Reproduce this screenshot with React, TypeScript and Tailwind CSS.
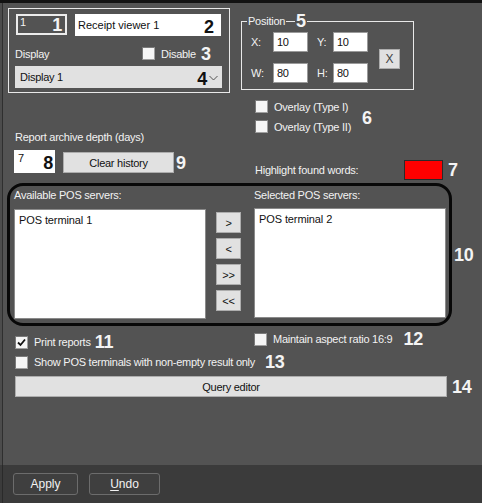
import { ReactNode } from "react";

function Num({ children, dark, className = "" }: { children: ReactNode; dark?: boolean; className?: string }) {
  return (
    <span
      className={`text-[18px] leading-[18px] font-bold ${dark ? "text-[#111]" : "text-[#f4f4f4]"} ${className}`}
    >
      {children}
    </span>
  );
}

function Check({ checked, label, className = "" }: { checked?: boolean; label: string; className?: string }) {
  return (
    <div className={`flex items-center h-[13px] ${className}`}>
      <span className="w-[13px] h-[13px] bg-[#f6f6f6] border border-[#a0a0a0] border-t-[#7a7a7a] border-l-[#7a7a7a] flex items-center justify-center shrink-0">
        {checked && (
          <svg width="9" height="9" viewBox="0 0 9 9">
            <path d="M1 4.5 L3.5 7 L8 1.5" stroke="#111" strokeWidth="1.8" fill="none" />
          </svg>
        )}
      </span>
      <span className="ml-[6px] whitespace-nowrap">{label}</span>
    </div>
  );
}

function GrayBtn({ children, className = "" }: { children: ReactNode; className?: string }) {
  return (
    <div
      className={`bg-[#e1e1e1] border border-[#adadad] text-[#111] flex items-center justify-center ${className}`}
    >
      {children}
    </div>
  );
}

export default function App() {
  return (
    <div className="w-[482px] h-[503px] bg-[#535353] flex flex-col overflow-hidden text-[11px] leading-[14px] tracking-[-0.25px] text-[#f2f2f2] font-['Liberation_Sans',Arial,sans-serif]">
      <div className="h-[3px] bg-[#121212] shrink-0" />

      <div className="flex-1 flex flex-col shadow-[inset_2px_0_0_#4c4c4c,inset_3px_0_0_#2f2f2f]">
        {/* top area */}
        <div className="flex h-[180px] shrink-0">
          {/* left column */}
          <div className="w-[241px] flex flex-col">
            <div className="ml-[8px] mt-[5px] w-[222px] h-[85px] border border-[#e8e8e8] pl-[6px] pt-[5px] flex flex-col">
              <div className="flex">
                <div className="ml-[1px] w-[51px] h-[21px] border-2 border-[#ececec] flex items-center justify-between pl-[2px] pr-[3px]">
                  <span className="self-start leading-[13px]">1</span>
                  <Num>1</Num>
                </div>
                <div className="ml-[8px] w-[146px] h-[22px] bg-white text-[#111] tracking-normal flex items-center justify-between pl-[3px] pr-[7px]">
                  <span>Receipt viewer 1</span>
                  <Num dark className="mt-[3px]">2</Num>
                </div>
              </div>
              <div className="flex items-center h-[13px] mt-[11px]">
                <span className="w-[127px]">Display</span>
                <Check label="Disable" />
                <Num className="ml-[5px]">3</Num>
              </div>
              <div className="mt-[6px] w-[207px] h-[22px] bg-[#e1e1e1] text-[#111] flex items-center pl-[5px] pr-[4px]">
                <span className="flex-1">Display 1</span>
                <Num dark className="mt-[3px]">4</Num>
                <svg width="9" height="6" viewBox="0 0 9 6" className="ml-[2px] mt-[1px]">
                  <path d="M0.5 1 L4.5 5 L8.5 1" stroke="#555" strokeWidth="1" fill="none" />
                </svg>
              </div>
            </div>

            <div className="mt-[37px] pl-[15px]">Report archive depth (days)</div>
            <div className="flex items-start mt-[6px] pl-[14px]">
              <div className="w-[41px] h-[23px] bg-white text-[#111] flex justify-between pl-[4px] pr-[2px]">
                <span className="leading-[13px] mt-[2px]">7</span>
                <Num dark className="mt-[4px]">8</Num>
              </div>
              <GrayBtn className="ml-[8px] mt-[2px] w-[111px] h-[21px]">Clear history</GrayBtn>
              <Num className="ml-[2px] mt-[4px]">9</Num>
            </div>
          </div>

          {/* right column */}
          <div className="flex flex-col">
            <div className="relative mt-[18px] w-[173px] h-[69px] border border-[#e8e8e8] pt-[10px] pl-[9px] flex items-center">
              <span className="absolute -top-[8px] left-[5px] px-[1px] bg-[#535353] leading-[14px]">Position</span>
              <span className="absolute -top-[10px] left-[53px] bg-[#535353] px-[1px]">
                <Num>5</Num>
              </span>
              <div className="flex flex-col gap-[11px] self-start">
                <div className="flex items-center">
                  <span className="w-[22px]">X:</span>
                  <div className="w-[35px] h-[20px] bg-white text-[#111] border border-[#9a9a9a] pl-[3px] flex items-center">10</div>
                  <span className="ml-[9px] w-[16px]">Y:</span>
                  <div className="w-[35px] h-[20px] bg-white text-[#111] border border-[#9a9a9a] pl-[3px] flex items-center">10</div>
                </div>
                <div className="flex items-center">
                  <span className="w-[22px]">W:</span>
                  <div className="w-[35px] h-[20px] bg-white text-[#111] border border-[#9a9a9a] pl-[3px] flex items-center">80</div>
                  <span className="ml-[9px] w-[16px]">H:</span>
                  <div className="w-[35px] h-[20px] bg-white text-[#111] border border-[#9a9a9a] pl-[3px] flex items-center">80</div>
                </div>
              </div>
              <GrayBtn className="ml-[11px] -mt-[4px] w-[21px] h-[20px] text-[12px] font-light text-[#444]">X</GrayBtn>
            </div>

            <div className="flex items-center ml-[14px] mt-[10px]">
              <div className="w-[107px] flex flex-col gap-[7px]">
                <Check label="Overlay (Type I)" />
                <Check label="Overlay (Type II)" />
              </div>
              <Num className="mt-[3px]">6</Num>
            </div>

            <div className="flex items-center ml-[14px] mt-[27px] h-[20px]">
              <span className="w-[149px]">Highlight found words:</span>
              <div className="w-[39px] h-[20px] bg-[#ff0000] border border-[#2a2a2a]" />
              <Num className="ml-[5px]">7</Num>
            </div>
          </div>
        </div>

        {/* POS servers */}
        <div className="flex items-center">
          <div className="ml-[7px] w-[445px] h-[143px] border-[3px] border-[#080808] rounded-[16px] flex pl-[4px] pt-[2px]">
            <div className="flex flex-col">
              <span>Available POS servers:</span>
              <div className="mt-[7px] w-[192px] h-[110px] bg-white border border-[#8a8a8a] text-[#111] pl-[4px] pt-[3px] tracking-[-0.1px]">
                POS terminal 1
              </div>
            </div>
            <div className="ml-[10px] mt-[24px] flex flex-col gap-[5px]">
              <GrayBtn className="w-[25px] h-[21px]">&gt;</GrayBtn>
              <GrayBtn className="w-[25px] h-[21px]">&lt;</GrayBtn>
              <GrayBtn className="w-[25px] h-[21px]">&gt;&gt;</GrayBtn>
              <GrayBtn className="w-[25px] h-[21px]">&lt;&lt;</GrayBtn>
            </div>
            <div className="ml-[13px] flex flex-col">
              <span>Selected POS servers:</span>
              <div className="mt-[6px] w-[192px] h-[110px] bg-white border border-[#8a8a8a] text-[#111] pl-[4px] pt-[3px] tracking-[-0.1px]">
                POS terminal 2
              </div>
            </div>
          </div>
          <Num className="ml-[2px]">10</Num>
        </div>

        {/* options */}
        <div className="flex items-start mt-[4px] h-[16px]">
          <div className="w-[254px] pl-[15px] flex items-center mt-[3px]">
            <Check checked label="Print reports" />
            <Num className="ml-[4px]">11</Num>
          </div>
          <div className="flex items-center">
            <Check label="Maintain aspect ratio 16:9" />
            <Num className="ml-[11px]">12</Num>
          </div>
        </div>
        <div className="flex items-center pl-[15px] mt-[7px]">
          <Check label="Show POS terminals with non-empty result only" />
          <Num className="ml-[10px]">13</Num>
        </div>
        <div className="flex items-center pl-[15px] mt-[5px]">
          <GrayBtn className="w-[432px] h-[21px]">Query editor</GrayBtn>
          <Num className="ml-[5px]">14</Num>
        </div>

        <div className="flex-1" />

        <div className="h-[38px] bg-[#3b3b3b] flex items-start pt-[8px] pl-[13px] gap-[11px] shadow-[inset_2px_0_0_#3b3b3b,inset_3px_0_0_#2a2a2a] text-[12px] tracking-normal">
          <div className="w-[65px] h-[22px] border border-[#6c6c6c] rounded-[3px] bg-[#3f3f3f] flex items-center justify-center">
            Apply
          </div>
          <div className="w-[71px] h-[22px] border border-[#6c6c6c] rounded-[3px] bg-[#3f3f3f] flex items-center justify-center">
            <span className="underline underline-offset-2">U</span>ndo
          </div>
        </div>
      </div>
    </div>
  );
}
